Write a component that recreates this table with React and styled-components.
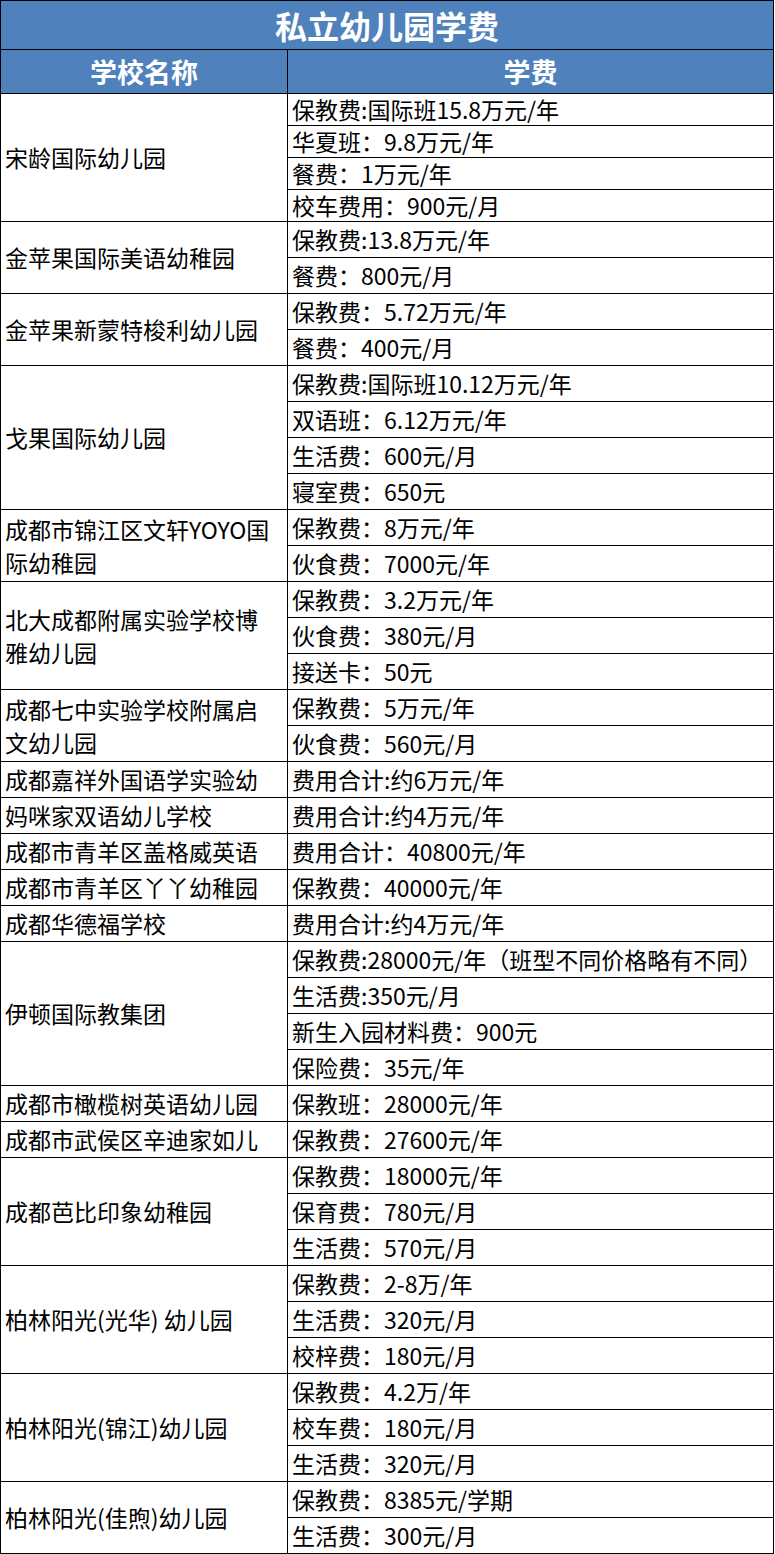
import styled, { createGlobalStyle } from "styled-components";

const GlobalStyle = createGlobalStyle`
  html, body {
    margin: 0;
    padding: 0;
    background: #ffffff;
  }
  body {
    font-family: "Noto Sans CJK SC", "Noto Sans", sans-serif;
    color: #000;
  }
`;

const BLUE = "#4f81bd";

const Sheet = styled.div`
  width: 774px;
  border-left: 1px solid #000;
  border-top: 1px solid #000;
  box-sizing: border-box;
`;

const TitleBar = styled.div`
  height: 49px;
  box-sizing: border-box;
  border-right: 1px solid #000;
  border-bottom: 1px solid #000;
  background: ${BLUE};
  color: #fff;
  font-size: 32px;
  font-weight: 700;
  line-height: 1;
  display: flex;
  align-items: center;
  justify-content: center;
`;

const Row = styled.div`
  display: grid;
  grid-template-columns: 287px 486px;
`;

const HeadCell = styled.div`
  height: 44px;
  box-sizing: border-box;
  border-right: 1px solid #000;
  border-bottom: 1px solid #000;
  background: ${BLUE};
  color: #fff;
  font-size: 27px;
  font-weight: 700;
  line-height: 1;
  display: flex;
  align-items: center;
  justify-content: center;
`;

const NameCell = styled.div`
  box-sizing: border-box;
  border-right: 1px solid #000;
  border-bottom: 1px solid #000;
  padding: 0 4px;
  font-size: 23px;
  line-height: 33px;
  display: flex;
  align-items: center;
  white-space: nowrap;
`;

const FeeList = styled.div`
  display: flex;
  flex-direction: column;
`;

const FeeLine = styled.div`
  height: ${(p) => (p.$compact ? 32 : 36)}px;
  box-sizing: border-box;
  border-right: 1px solid #000;
  border-bottom: 1px solid #000;
  padding-left: 4px;
  font-size: 23px;
  line-height: 1;
  display: flex;
  align-items: center;
  white-space: nowrap;
`;

const schools = [
  {
    name: ["宋龄国际幼儿园"],
    compact: true,
    fees: ["保教费:国际班15.8万元/年", "华夏班：9.8万元/年", "餐费：1万元/年", "校车费用：900元/月"],
  },
  { name: ["金苹果国际美语幼稚园"], fees: ["保教费:13.8万元/年", "餐费：800元/月"] },
  { name: ["金苹果新蒙特梭利幼儿园"], fees: ["保教费：5.72万元/年", "餐费：400元/月"] },
  {
    name: ["戈果国际幼儿园"],
    fees: ["保教费:国际班10.12万元/年", "双语班：6.12万元/年", "生活费：600元/月", "寝室费：650元"],
  },
  { name: ["成都市锦江区文轩YOYO国", "际幼稚园"], fees: ["保教费：8万元/年", "伙食费：7000元/年"] },
  {
    name: ["北大成都附属实验学校博", "雅幼儿园"],
    fees: ["保教费：3.2万元/年", "伙食费：380元/月", "接送卡：50元"],
  },
  { name: ["成都七中实验学校附属启", "文幼儿园"], fees: ["保教费：5万元/年", "伙食费：560元/月"] },
  { name: ["成都嘉祥外国语学实验幼"], fees: ["费用合计:约6万元/年"] },
  { name: ["妈咪家双语幼儿学校"], fees: ["费用合计:约4万元/年"] },
  { name: ["成都市青羊区盖格威英语"], fees: ["费用合计：40800元/年"] },
  { name: ["成都市青羊区丫丫幼稚园"], fees: ["保教费：40000元/年"] },
  { name: ["成都华德福学校"], fees: ["费用合计:约4万元/年"] },
  {
    name: ["伊顿国际教集团"],
    fees: ["保教费:28000元/年（班型不同价格略有不同）", "生活费:350元/月", "新生入园材料费：900元", "保险费：35元/年"],
  },
  { name: ["成都市橄榄树英语幼儿园"], fees: ["保教班：28000元/年"] },
  { name: ["成都市武侯区辛迪家如儿"], fees: ["保教费：27600元/年"] },
  { name: ["成都芭比印象幼稚园"], fees: ["保教费：18000元/年", "保育费：780元/月", "生活费：570元/月"] },
  { name: ["柏林阳光(光华) 幼儿园"], fees: ["保教费：2-8万/年", "生活费：320元/月", "校梓费：180元/月"] },
  { name: ["柏林阳光(锦江)幼儿园"], fees: ["保教费：4.2万/年", "校车费：180元/月", "生活费：320元/月"] },
  { name: ["柏林阳光(佳煦)幼儿园"], fees: ["保教费：8385元/学期", "生活费：300元/月"] },
];

const App = () => {
  return (
    <>
      <GlobalStyle />
      <Sheet>
        <TitleBar>私立幼儿园学费</TitleBar>
        <Row>
          <HeadCell>学校名称</HeadCell>
          <HeadCell>学费</HeadCell>
        </Row>
        {schools.map((s) => (
          <Row key={s.name.join("")}>
            <NameCell>
              <div>
                {s.name.map((line, i) => (
                  <div key={i}>{line}</div>
                ))}
              </div>
            </NameCell>
            <FeeList>
              {s.fees.map((fee, i) => (
                <FeeLine key={i} $compact={s.compact}>
                  {fee}
                </FeeLine>
              ))}
            </FeeList>
          </Row>
        ))}
      </Sheet>
    </>
  );
};

export default App;
